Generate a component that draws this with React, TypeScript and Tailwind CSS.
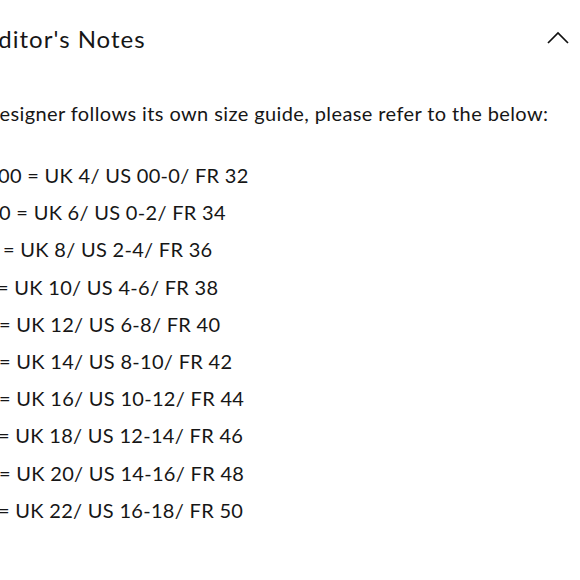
const sizes = [
  { text: "00 = UK 4/ US 00-0/ FR 32", ml: "-ml-[2px]" },
  { text: "0 = UK 6/ US 0-2/ FR 34", ml: "-ml-[1px]" },
  { text: "= UK 8/ US 2-4/ FR 36", ml: "ml-[3px]" },
  { text: "= UK 10/ US 4-6/ FR 38", ml: "-ml-[3px]" },
  { text: "= UK 12/ US 6-8/ FR 40", ml: "-ml-[1px]" },
  { text: "= UK 14/ US 8-10/ FR 42", ml: "-ml-[1px]" },
  { text: "= UK 16/ US 10-12/ FR 44", ml: "-ml-[1px]" },
  { text: "= UK 18/ US 12-14/ FR 46", ml: "-ml-[2px]" },
  { text: "= UK 20/ US 14-16/ FR 48", ml: "-ml-[1px]" },
  { text: "= UK 22/ US 16-18/ FR 50", ml: "-ml-[2px]" },
];

export default function App() {
  return (
    <div className="w-[580px] h-[580px] overflow-hidden bg-white text-[#161616] font-['Lato',sans-serif]">
      {/* Accordion header */}
      <div className="flex items-center justify-between h-[78px] pr-[11px]">
        <h2 className="-ml-[16px] text-[24px] leading-none tracking-[1px]">Editor's Notes</h2>
        <svg width="22" height="13" viewBox="0 0 22 13" fill="none" className="-mt-[3px]">
          <polyline points="1,12 11,2 21,12" stroke="#111" strokeWidth="1.7" />
        </svg>
      </div>
      {/* Accordion body */}
      <div className="pt-[23px] text-[20px]">
        <p className="-ml-[16px] leading-[24px] tracking-[0.4px] whitespace-nowrap">Designer follows its own size guide, please refer to the below:</p>
        <ul className="mt-[38px] flex flex-col gap-[13.2px]">
          {sizes.map((s) => (
            <li key={s.text} className={`${s.ml} leading-[24px] tracking-[0.3px] whitespace-nowrap`}>{s.text}</li>
          ))}
        </ul>
      </div>
    </div>
  );
}
